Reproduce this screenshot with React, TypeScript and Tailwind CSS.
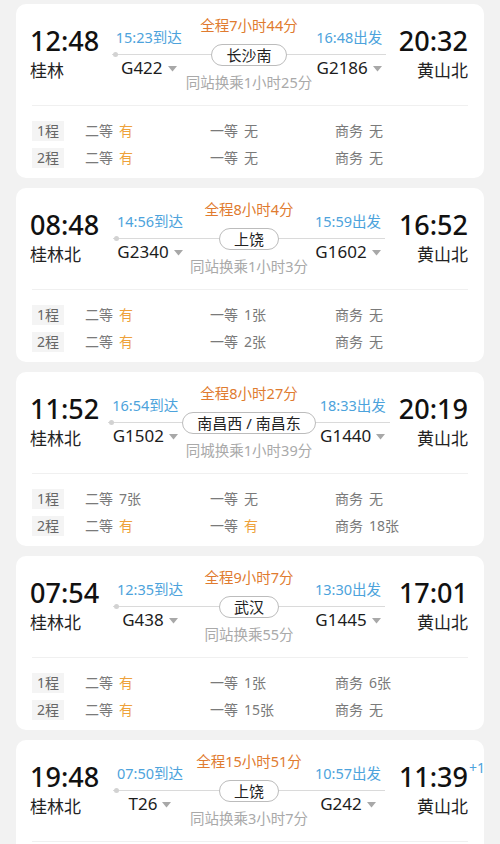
import React from "react";

type Seat = { cls: string; val: string };
type Trip = {
  dep: string;
  from: string;
  arrive: string;
  code1: string;
  total: string;
  transfer: string;
  note: string;
  leave: string;
  code2: string;
  arr: string;
  plus?: string;
  to: string;
  legs: Seat[][];
};

const trips: Trip[] = [
  {
    dep: "12:48", from: "桂林", arrive: "15:23到达", code1: "G422",
    total: "全程7小时44分", transfer: "长沙南", note: "同站换乘1小时25分",
    leave: "16:48出发", code2: "G2186", arr: "20:32", to: "黄山北",
    legs: [
      [{ cls: "二等", val: "有" }, { cls: "一等", val: "无" }, { cls: "商务", val: "无" }],
      [{ cls: "二等", val: "有" }, { cls: "一等", val: "无" }, { cls: "商务", val: "无" }],
    ],
  },
  {
    dep: "08:48", from: "桂林北", arrive: "14:56到达", code1: "G2340",
    total: "全程8小时4分", transfer: "上饶", note: "同站换乘1小时3分",
    leave: "15:59出发", code2: "G1602", arr: "16:52", to: "黄山北",
    legs: [
      [{ cls: "二等", val: "有" }, { cls: "一等", val: "1张" }, { cls: "商务", val: "无" }],
      [{ cls: "二等", val: "有" }, { cls: "一等", val: "2张" }, { cls: "商务", val: "无" }],
    ],
  },
  {
    dep: "11:52", from: "桂林北", arrive: "16:54到达", code1: "G1502",
    total: "全程8小时27分", transfer: "南昌西 / 南昌东", note: "同城换乘1小时39分",
    leave: "18:33出发", code2: "G1440", arr: "20:19", to: "黄山北",
    legs: [
      [{ cls: "二等", val: "7张" }, { cls: "一等", val: "无" }, { cls: "商务", val: "无" }],
      [{ cls: "二等", val: "有" }, { cls: "一等", val: "有" }, { cls: "商务", val: "18张" }],
    ],
  },
  {
    dep: "07:54", from: "桂林北", arrive: "12:35到达", code1: "G438",
    total: "全程9小时7分", transfer: "武汉", note: "同站换乘55分",
    leave: "13:30出发", code2: "G1445", arr: "17:01", to: "黄山北",
    legs: [
      [{ cls: "二等", val: "有" }, { cls: "一等", val: "1张" }, { cls: "商务", val: "6张" }],
      [{ cls: "二等", val: "有" }, { cls: "一等", val: "15张" }, { cls: "商务", val: "无" }],
    ],
  },
  {
    dep: "19:48", from: "桂林北", arrive: "07:50到达", code1: "T26",
    total: "全程15小时51分", transfer: "上饶", note: "同站换乘3小时7分",
    leave: "10:57出发", code2: "G242", arr: "11:39", plus: "+1", to: "黄山北",
    legs: [
      [{ cls: "二等", val: "有" }, { cls: "一等", val: "无" }, { cls: "商务", val: "无" }],
      [{ cls: "二等", val: "有" }, { cls: "一等", val: "无" }, { cls: "商务", val: "无" }],
    ],
  },
];

const Caret = () => (
  <svg width="9" height="6" viewBox="0 0 9 6" className="ml-[5px] mt-[2px]">
    <path d="M0 0 L9 0 L4.5 5.5 Z" fill="#a8a8a8" />
  </svg>
);

const TrainCol = ({ label, code }: { label: string; code: string }) => (
  <div className="relative z-10 flex w-[74px] flex-col items-center pt-[23px]">
    <span className="whitespace-nowrap text-[14.5px] leading-[20px] text-[#4da3dc]">{label}</span>
    <div className="mt-[9px] flex items-center">
      <span className="text-[17px] leading-[24px] text-[#1c1c1c]">{code}</span>
      <Caret />
    </div>
  </div>
);

const TripCard = ({ t }: { t: Trip }) => {
  return (
    <section className="mx-4 rounded-[10px] bg-white">
      {/* Times and transfer */}
      <div className="flex h-[101px] pl-[14px] pr-[16px]">
        <div className="flex w-[83px] flex-col pt-[21px]">
          <span className="text-[27px] font-medium leading-[32px] text-[#111]">{t.dep}</span>
          <span className="mt-[2px] text-[17px] leading-[24px] text-[#222]">{t.from}</span>
        </div>

        <div className="relative flex flex-1">
          <div className="absolute left-0 right-0 top-[50px] h-px bg-[#dadada]" />
          <div className="absolute left-[1px] top-[48px] h-[5px] w-[5px] rounded-full bg-[#d2d2d2]" />

          <TrainCol label={t.arrive} code={t.code1} />

          <div className="relative z-10 flex flex-1 flex-col items-center pt-[11px]">
            <span className="whitespace-nowrap text-[14.5px] leading-[20px] text-[#e07b2f]">{t.total}</span>
            <span className="mt-[9px] flex h-[22px] items-center whitespace-nowrap rounded-full border border-[#bcbcbc] bg-white px-[14px] text-[15px] leading-[20px] text-[#222]">
              {t.transfer}
            </span>
            <span className="mt-[6px] whitespace-nowrap text-[14.5px] leading-[20px] text-[#a9a9a9]">{t.note}</span>
          </div>

          <TrainCol label={t.leave} code={t.code2} />
        </div>

        <div className="flex w-[83px] flex-col items-end pt-[21px]">
          <span className="relative text-[27px] font-medium leading-[32px] text-[#111]">
            {t.arr}
            {t.plus && (
              <span className="absolute left-full top-[-3px] ml-[1px] text-[14px] font-normal leading-[20px] text-[#4da3dc]">
                {t.plus}
              </span>
            )}
          </span>
          <span className="mt-[2px] text-[17px] leading-[24px] text-[#222]">{t.to}</span>
        </div>
      </div>

      <div className="mx-[16px] h-px bg-[#f0f0f0]" />

      {/* Seats per leg */}
      <div className="px-[16px] pb-[7px] pt-[11px]">
        {t.legs.map((leg, i) => (
          <div key={i} className="flex h-[27px] items-center text-[14px] leading-[20px]">
            <div className="w-[53px]">
              <span className="inline-block bg-[#f4f4f4] px-[5px] text-[#666]">{i + 1}程</span>
            </div>
            {leg.map((s) => (
              <div key={s.cls} className="w-[125px] text-[#7a7a7a]">
                {s.cls}
                <span className={s.val === "有" ? "ml-[6px] text-[#eea23c]" : "ml-[6px] text-[#7a7a7a]"}>
                  {s.val}
                </span>
              </div>
            ))}
          </div>
        ))}
      </div>
    </section>
  );
};

export default function App() {
  return (
    <main
      className="flex min-h-screen flex-col gap-[10px] bg-[#f2f2f2] pb-4 pt-[4px]"
      style={{ fontFamily: '"Noto Sans", "Noto Sans CJK SC", sans-serif' }}
    >
      {trips.map((t) => (
        <TripCard key={t.dep} t={t} />
      ))}
    </main>
  );
}
